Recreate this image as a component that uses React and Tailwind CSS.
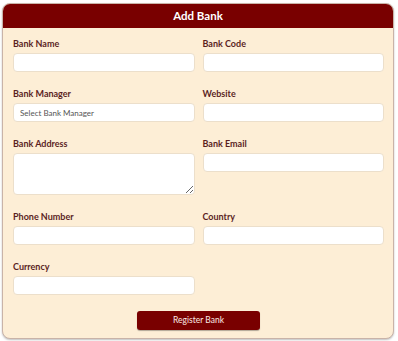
import React from "react";

function Field({ label, children }) {
  return (
    <div className="flex flex-col">
      <label className="text-[9px] font-bold text-[#5b1f1f] leading-[12px] h-[12px]">{label}</label>
      <div className="mt-[3px]">{children}</div>
    </div>
  );
}

function Input({ placeholder }) {
  return (
    <input
      placeholder={placeholder}
      className="block w-full h-[19px] rounded-[4px] border border-[#ecdfcb] bg-white px-[6px] text-[8px] text-[#444] placeholder:text-[#555] outline-none"
    />
  );
}

export default function App() {
  return (
    <div className="w-[398px] h-[341px] bg-white pt-[3px] pl-[2px]" style={{ fontFamily: "Lato, 'Open Sans', sans-serif" }}>
      <div className="w-[392px] h-[336px] rounded-[8px] border border-[#c9b3a8] bg-[#fdeed6] shadow-[0_1px_2px_rgba(0,0,0,0.25)] overflow-hidden flex flex-col">
        <div className="h-[24px] bg-[#790000] flex items-center justify-center text-white text-[11.5px] font-bold">
          Add Bank
        </div>
        <div className="px-[10px] pr-[9px] pt-[10px] flex flex-col">
          <div className="grid grid-cols-2 gap-x-[8px] gap-y-[16px]">
            <Field label="Bank Name"><Input /></Field>
            <Field label="Bank Code"><Input /></Field>
            <Field label="Bank Manager"><Input placeholder="Select Bank Manager" /></Field>
            <Field label="Website"><Input /></Field>
            <Field label="Bank Address">
              <textarea className="block w-full h-[42px] rounded-[4px] border border-[#ecdfcb] bg-white outline-none resize-y" />
            </Field>
            <Field label="Bank Email"><Input /></Field>
            <Field label="Phone Number"><Input /></Field>
            <Field label="Country"><Input /></Field>
            <Field label="Currency"><Input /></Field>
            <div />
          </div>
          <div className="flex justify-center mt-[16px]">
            <button className="w-[123px] h-[19px] rounded-[3px] bg-[#790000] text-[8.5px] text-[#fbe9e4] shadow-[0_1px_1px_rgba(0,0,0,0.3)]">
              Register Bank
            </button>
          </div>
        </div>
      </div>
    </div>
  );
}
